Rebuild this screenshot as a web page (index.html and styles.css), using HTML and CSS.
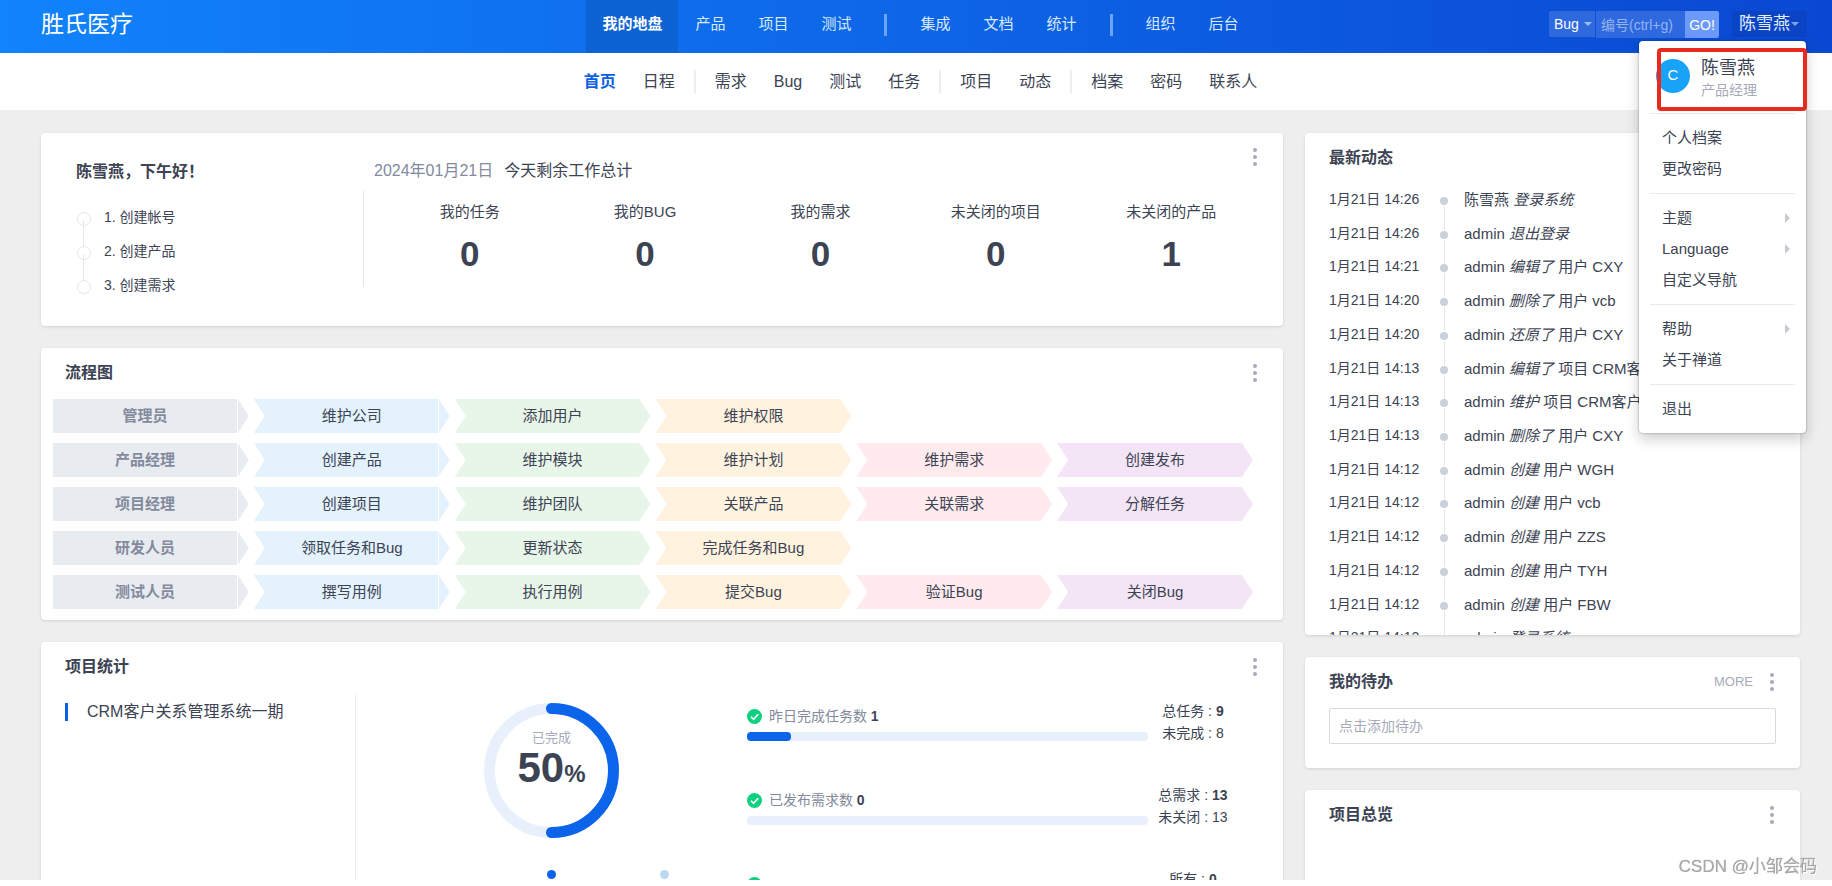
FILE: index.html
```html
<!DOCTYPE html>
<html lang="zh-CN">
<head>
<meta charset="utf-8">
<title>我的地盘</title>
<link rel="stylesheet" href="styles.css">
</head>
<body>
<div class="app">
<header class="topbar">
  <h1 class="brand">胜氏医疗</h1>
  <nav class="mainnav" aria-label="主导航">
    <a class="active" href="#">我的地盘</a><a href="#">产品</a><a href="#">项目</a><a href="#">测试</a>
    <span class="sep"></span>
    <a href="#">集成</a><a href="#">文档</a><a href="#">统计</a>
    <span class="sep"></span>
    <a href="#">组织</a><a href="#">后台</a>
  </nav>
  <div class="tools">
    <form class="search">
      <span class="select-wrap"><select aria-label="类型"><option>Bug</option></select></span>
      <input type="text" aria-label="编号" placeholder="编号(ctrl+g)">
      <button type="button">GO!</button>
    </form>
    <div class="user">
      <button class="user-btn" type="button">陈雪燕<span class="caret"></span></button>
      <div class="menu">
        <div class="profile">
          <span class="avatar">C</span>
          <div><div class="profile-name">陈雪燕</div><div class="profile-role">产品经理</div></div>
        </div>
        <hr>
        <a href="#">个人档案</a>
        <a href="#">更改密码</a>
        <hr>
        <a class="more" href="#">主题</a>
        <a class="more" href="#">Language</a>
        <a href="#">自定义导航</a>
        <hr>
        <a class="more" href="#">帮助</a>
        <a href="#">关于禅道</a>
        <hr>
        <a href="#">退出</a>
        <div class="highlight"></div>
      </div>
    </div>
  </div>
</header>
<nav class="subnav" aria-label="子导航">
  <a class="active" href="#">首页</a><a href="#">日程</a>
  <span class="sep"></span>
  <a href="#">需求</a><a href="#">Bug</a><a href="#">测试</a><a href="#">任务</a>
  <span class="sep"></span>
  <a href="#">项目</a><a href="#">动态</a>
  <span class="sep"></span>
  <a href="#">档案</a><a href="#">密码</a><a href="#">联系人</a>
</nav>
<main class="board">
  <div class="col">
    <section class="card welcome">
      <div class="greet">
        <h2>陈雪燕，下午好！</h2>
        <ol class="steps"><li>1. 创建帐号</li><li>2. 创建产品</li><li>3. 创建需求</li></ol>
      </div>
      <div class="summary">
        <p class="today"><time>2024年01月21日</time><span>今天剩余工作总计</span></p>
        <dl class="stats">
          <div><dt>我的任务</dt><dd>0</dd></div>
          <div><dt>我的BUG</dt><dd>0</dd></div>
          <div><dt>我的需求</dt><dd>0</dd></div>
          <div><dt>未关闭的项目</dt><dd>0</dd></div>
          <div><dt>未关闭的产品</dt><dd>1</dd></div>
        </dl>
      </div>
      <button class="kebab corner" type="button" aria-label="更多"><i></i><i></i><i></i></button>
    </section>

    <section class="card">
      <header class="card-head"><h2>流程图</h2><button class="kebab" type="button" aria-label="更多"><i></i><i></i><i></i></button></header>
      <div class="flow">
        <div class="step role">管理员</div><a class="step c1" href="#">维护公司</a><a class="step c2" href="#">添加用户</a><a class="step c3" href="#">维护权限</a>
        <div class="step role">产品经理</div><a class="step c1" href="#">创建产品</a><a class="step c2" href="#">维护模块</a><a class="step c3" href="#">维护计划</a><a class="step c4" href="#">维护需求</a><a class="step c5" href="#">创建发布</a>
        <div class="step role">项目经理</div><a class="step c1" href="#">创建项目</a><a class="step c2" href="#">维护团队</a><a class="step c3" href="#">关联产品</a><a class="step c4" href="#">关联需求</a><a class="step c5" href="#">分解任务</a>
        <div class="step role">研发人员</div><a class="step c1" href="#">领取任务和Bug</a><a class="step c2" href="#">更新状态</a><a class="step c3" href="#">完成任务和Bug</a>
        <div class="step role">测试人员</div><a class="step c1" href="#">撰写用例</a><a class="step c2" href="#">执行用例</a><a class="step c3" href="#">提交Bug</a><a class="step c4" href="#">验证Bug</a><a class="step c5" href="#">关闭Bug</a>
      </div>
    </section>

    <section class="card">
      <header class="card-head"><h2>项目统计</h2><button class="kebab" type="button" aria-label="更多"><i></i><i></i><i></i></button></header>
      <div class="project">
        <div class="project-list"><a href="#">CRM客户关系管理系统一期</a></div>
        <div class="progress">
          <div class="ring">
            <svg viewBox="0 0 135 135" aria-hidden="true">
              <circle cx="67.5" cy="67.5" r="62" fill="none" stroke="#e8f1fb" stroke-width="11"/>
              <path d="M67.5 5.5a62 62 0 0 1 0 124" fill="none" stroke="#0c64eb" stroke-width="11" stroke-linecap="round"/>
            </svg>
            <div class="ring-label"><small>已完成</small><strong>50<span>%</span></strong></div>
          </div>
          <div class="legend"><i class="done"></i><i class="rest"></i></div>
        </div>
        <div class="metrics">
          <div class="metric">
            <div>
              <p><svg class="tick" viewBox="0 0 15 15" aria-hidden="true"><circle cx="7.500" cy="7.500" r="7.500" fill="#0dd180"/><path d="M4 7.800l2.500 2.500 4.700-5" fill="none" stroke="#fff" stroke-width="1.600"/></svg>昨日完成任务数 <b>1</b></p>
              <div class="bar"><span style="width:11%"></span></div>
            </div>
            <div class="totals"><div>总任务 : <b>9</b><br>未完成 : 8</div></div>
          </div>
          <div class="metric">
            <div>
              <p><svg class="tick" viewBox="0 0 15 15" aria-hidden="true"><circle cx="7.500" cy="7.500" r="7.500" fill="#0dd180"/><path d="M4 7.800l2.500 2.500 4.700-5" fill="none" stroke="#fff" stroke-width="1.600"/></svg>已发布需求数 <b>0</b></p>
              <div class="bar"></div>
            </div>
            <div class="totals"><div>总需求 : <b>13</b><br>未关闭 : 13</div></div>
          </div>
          <div class="metric">
            <div>
              <p><svg class="tick" viewBox="0 0 15 15" aria-hidden="true"><circle cx="7.500" cy="7.500" r="7.500" fill="#0dd180"/></svg></p>
            </div>
            <div class="totals"><div>所有 : <b>0</b></div></div>
          </div>
        </div>
      </div>
    </section>
  </div>

  <div class="col">
    <section class="card">
      <header class="card-head"><h2>最新动态</h2></header>
      <div class="feed">
      <ul>
        <li><time>1月21日 14:26</time><span>陈雪燕 <em>登录系统</em></span></li>
        <li><time>1月21日 14:26</time><span>admin <em>退出登录</em></span></li>
        <li><time>1月21日 14:21</time><span>admin <em>编辑了</em> 用户 CXY</span></li>
        <li><time>1月21日 14:20</time><span>admin <em>删除了</em> 用户 vcb</span></li>
        <li><time>1月21日 14:20</time><span>admin <em>还原了</em> 用户 CXY</span></li>
        <li><time>1月21日 14:13</time><span>admin <em>编辑了</em> 项目 CRM客户关系管理系统一期</span></li>
        <li><time>1月21日 14:13</time><span>admin <em>维护</em> 项目 CRM客户关系管理系统一期</span></li>
        <li><time>1月21日 14:13</time><span>admin <em>删除了</em> 用户 CXY</span></li>
        <li><time>1月21日 14:12</time><span>admin <em>创建</em> 用户 WGH</span></li>
        <li><time>1月21日 14:12</time><span>admin <em>创建</em> 用户 vcb</span></li>
        <li><time>1月21日 14:12</time><span>admin <em>创建</em> 用户 ZZS</span></li>
        <li><time>1月21日 14:12</time><span>admin <em>创建</em> 用户 TYH</span></li>
        <li><time>1月21日 14:12</time><span>admin <em>创建</em> 用户 FBW</span></li>
        <li><time>1月21日 14:12</time><span>admin <em>登录系统</em></span></li>
      </ul>
      </div>
    </section>
    <section class="card">
      <header class="card-head"><h2>我的待办</h2><a class="more-link" href="#">MORE</a><button class="kebab" type="button" aria-label="更多"><i></i><i></i><i></i></button></header>
      <div class="todo"><input type="text" aria-label="添加待办" placeholder="点击添加待办"></div>
    </section>
    <section class="card overview">
      <header class="card-head"><h2>项目总览</h2><button class="kebab" type="button" aria-label="更多"><i></i><i></i><i></i></button></header>
    </section>
  </div>
</main>
</div>
<div class="watermark">CSDN @小邹会码</div>
</body>
</html>
```
FILE: styles.css
```css
* { box-sizing: border-box; }
body {
  margin: 0;
  background: #fff;
  color: #3c4353;
  font: 15px/20px "Liberation Sans", "Noto Sans CJK SC", sans-serif;
  overflow: hidden;
}
h1, h2, p, ul, ol, dl, dd { margin: 0; padding: 0; list-style: none; }
a { color: inherit; text-decoration: none; }
button, input, select { font-family: inherit; margin: 0; border: 0; padding: 0; border-radius: 0; }
button { cursor: pointer; }

.app { height: calc(100vh - 6px); overflow: hidden; background: #eee; }

/* Top bar */
.topbar {
  display: grid;
  grid-template-columns: 1fr auto 1fr;
  height: 53px;
  padding: 0 25px 0 34px;
  background: linear-gradient(90deg, #1183fb, #0a48d1);
  color: #fff;
}
.brand { padding-left: 7px; font-size: 23px; font-weight: 400; line-height: 48px; }
.mainnav { display: flex; gap: 1px; line-height: 48px; }
.mainnav a { padding: 0 16px; color: #d9e9fd; }
.mainnav .active { background: #0d63d4; color: #fff; font-weight: 700; }
.mainnav .sep { width: 3px; height: 22px; margin: 14px 16px 0; background: #6ba4f6; }

.tools { display: flex; justify-content: flex-end; gap: 13px; padding-top: 11px; }
.search { display: flex; height: 27px; font-size: 14px; }
.select-wrap { position: relative; height: 26px; margin-right: 1px; }
.select-wrap::after {
  content: "";
  position: absolute;
  right: 3px;
  top: 11px;
  border: 4px solid transparent;
  border-top-color: #9dbcf3;
  border-bottom: 0;
  pointer-events: none;
}
.search select { appearance: none; width: 46px; height: 26px; padding-left: 5px; background: #2f69df; color: #fff; font-size: 14px; border-radius: 2px 0 0 2px; }
.search input { width: 89px; padding: 0 5px; background: #2f69df; color: #fff; font-size: 14px; }
.search input::placeholder { color: #94b3ef; }
.search button { width: 34px; background: #6c9afa; color: #fff; font-size: 14px; border-radius: 0 2px 2px 0; }

.user { position: relative; }
.user-btn { display: flex; align-items: center; gap: 1px; height: 26px; padding: 0 8px 0 7px; background: #0a44c4; color: #e5eeff; font-size: 17px; line-height: 26px; }
.caret { border: 4px solid transparent; border-top-color: #7fa5ee; border-bottom: 0; }

.menu {
  position: absolute;
  z-index: 5;
  top: 30px;
  right: 1px;
  width: 167px;
  padding: 8px 11px 9px;
  background: #fff;
  border-radius: 4px;
  box-shadow: 0 0 2px rgba(0, 0, 0, .4), 0 6px 14px rgba(0, 0, 0, .2);
  color: #3c4353;
}
.menu hr { height: 1px; margin: 9px 0 8px; border: 0; background: #e9eaee; }
.menu a { display: flex; align-items: center; justify-content: space-between; height: 31px; padding: 0 5px 0 12px; }
.menu .more::after { content: ""; border: 5px solid transparent; border-left-color: #c8cad0; border-right: 0; }
.profile { display: flex; gap: 11px; height: 55px; padding: 8px 6px 0; }
.avatar { width: 34px; height: 34px; margin-top: 2px; border-radius: 50%; background: #17a3f8; color: #fff; text-align: center; line-height: 32px; }
.profile-name { font-size: 18px; line-height: 22px; }
.profile-role { font-size: 14px; line-height: 22px; color: #a6aab8; }
.highlight { position: absolute; top: 7px; left: 18px; right: -1px; height: 63px; border: 4px solid #e9291d; border-radius: 4px; }

/* Sub navigation */
.subnav { display: flex; justify-content: center; align-items: center; gap: 1px; height: 57px; padding: 0 25px 0 34px; background: #fff; font-size: 16px; }
.subnav a { padding: 0 13px; }
.subnav .active { color: #0c60e1; font-weight: 700; }
.subnav .sep { width: 2px; height: 23px; margin: 0 5px; background: #eee; }

/* Board */
.board { display: grid; grid-template-columns: minmax(0, 143fr) minmax(0, 57fr); gap: 22px; padding: 23px 32px 0 41px; }
.col { display: flex; flex-direction: column; gap: 22px; }
.card { position: relative; background: #fff; border-radius: 4px; box-shadow: 0 1px 3px rgba(0, 0, 0, .12); overflow: hidden; }
.card-head { display: flex; align-items: center; height: 48px; padding: 2px 24px 0; }
.card h2 { flex: 1; font-size: 16px; line-height: 24px; font-weight: 700; }
.kebab { display: flex; flex-direction: column; align-items: flex-end; gap: 3px; width: 8px; padding-right: 2px; background: none; }
.kebab i { width: 4px; height: 4px; border-radius: 50%; background: #a6aab8; }
.corner { position: absolute; top: 15px; right: 24px; }
.more-link { margin-right: 15px; font-size: 13px; color: #a6aab8; }

.welcome { display: grid; grid-template-columns: 322fr 920fr; height: 193px; padding-top: 26px; }
.greet { padding-left: 35px; }
.greet h2 { line-height: 26px; }
.steps { padding-top: 15px; font-size: 14px; line-height: 34px; }
.steps li { position: relative; padding-left: 28px; }
.steps li::before { content: ""; position: absolute; left: 1px; top: 12px; width: 12px; height: 12px; border: 1px solid #e6e7ea; border-radius: 50%; }
.steps li + li::after { content: ""; position: absolute; left: 7px; top: -14px; width: 1px; height: 26px; background: #e6e7ea; }
.today { display: flex; gap: 11px; padding-left: 11px; font-size: 16px; line-height: 24px; }
.today time { color: #838a9d; }
.stats { display: grid; grid-template-columns: repeat(5, 1fr); height: 96px; margin-top: 8px; padding: 11px 24px 0 18px; border-left: 1px solid #e4e5e8; text-align: center; }
.stats dd { padding-top: 12px; font-size: 35px; line-height: 40px; font-weight: 700; }

.flow { display: grid; grid-template-columns: repeat(6, 1fr); grid-auto-rows: 34px; gap: 10px 5px; padding: 3px 30px 11px 12px; }
.step { text-align: center; line-height: 34px; clip-path: polygon(0 0, calc(100% - 11px) 0, 100% 50%, calc(100% - 11px) 100%, 0 100%, 11px 50%); }
.role { grid-column: 1; padding-right: 12px; color: #838a9d; font-weight: 700; background: linear-gradient(#fff, #fff) right 11px top / 1px 100% no-repeat #e8ebf0; clip-path: polygon(0 0, calc(100% - 11px) 0, 100% 50%, calc(100% - 11px) 100%, 0 100%); }
.c1 { background: linear-gradient(#fff, #fff) right 11px top / 1px 100% no-repeat #e3f2fd; }
.c2 { background: #e8f5e9; }
.c3 { background: #fff3e0; }
.c4 { background: #ffebee; }
.c5 { background: #f3e5f5; }

.project { display: grid; grid-template-columns: 315fr 391fr 536fr; height: 260px; margin-top: 4px; }
.project-list { padding: 9px 24px; border-right: 1px solid #eceef1; }
.project-list a { display: block; border-left: 3px solid #0c60e1; padding-left: 19px; font-size: 16px; line-height: 18px; }
.progress { padding-top: 9px; }
.ring { position: relative; width: 135px; margin: 0 auto; }
.ring svg { display: block; }
.ring-label { position: absolute; inset: 25px 0 auto; text-align: center; }
.ring-label small { display: block; font-size: 13px; line-height: 20px; color: #a6aab8; }
.ring-label strong { display: block; font-size: 42px; line-height: 40px; }
.ring-label span { font-size: 24px; }
.legend { display: grid; grid-template-columns: repeat(3, 113px); justify-content: center; justify-items: center; padding-top: 32px; }
.legend i { width: 9px; height: 9px; border-radius: 50%; }
.done { grid-column: 2; background: #0c64eb; }
.rest { grid-column: 3; background: #bdd7f3; }
.metric { display: grid; grid-template-columns: 401fr 135fr; height: 84px; padding-top: 6px; font-size: 14px; }
.metric p { display: flex; align-items: center; height: 32px; color: #838a9d; white-space: pre; }
.metric b { color: #3c4353; }
.tick { width: 15px; height: 15px; margin-right: 7px; }
.bar { height: 9px; border-radius: 4px; background: #e8f1fb; }
.bar span { display: block; height: 9px; border-radius: 4px; background: #0c64eb; }
.totals { display: flex; justify-content: center; align-items: flex-start; padding-right: 45px; text-align: right; line-height: 22px; white-space: nowrap; }

.feed { height: 454px; padding-top: 2px; overflow: hidden; }
.feed ul { display: grid; grid-auto-rows: 1fr; height: 472px; padding: 0 24px; }
.feed li { position: relative; display: grid; grid-template-columns: 135px 1fr; line-height: 33px; white-space: nowrap; }
.feed time { font-size: 14px; }
.feed li::before { content: ""; position: absolute; z-index: 1; left: 111px; top: 14px; width: 8px; height: 8px; border-radius: 50%; background: #cbd0db; }
.feed li::after { content: ""; position: absolute; left: 115px; top: 23px; width: 1px; height: 24px; background: #e4e6eb; }

.todo { padding: 3px 24px 24px; }
.todo input { display: block; width: 100%; height: 36px; padding: 0 9px; border: 1px solid #d8dbde; border-radius: 2px; font-size: 14px; }
.todo input::placeholder { color: #a6aab8; }
.overview { height: 300px; }

.watermark { position: fixed; right: 15px; bottom: 7px; font-size: 17px; line-height: 24px; color: #a8a8a8; text-shadow: 1px 1px 0 #fff, 0 0 1px #888; }
```
